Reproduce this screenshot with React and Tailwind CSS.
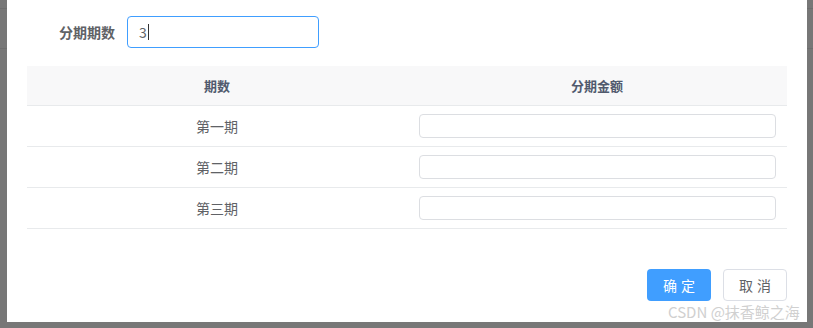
import React from "react";

export default function App() {
  const rows = ["第一期", "第二期", "第三期"];

  return (
    <div
      className="relative w-[813px] h-[328px] bg-[#777777] overflow-hidden"
      style={{ fontFamily: '"Noto Sans CJK SC", "Noto Sans", sans-serif' }}
    >
      <div className="absolute left-0 top-[8px] w-[7px] h-px bg-[#6e6e6e]" />
      <div className="absolute left-0 top-[48px] w-[7px] h-px bg-[#6e6e6e]" />
      <div className="absolute right-0 top-[8px] w-[6px] h-px bg-[#6e6e6e]" />
      <div className="absolute right-0 top-[48px] w-[6px] h-px bg-[#6e6e6e]" />

      <div className="ml-[7px] w-[800px] h-[322px] bg-white flex flex-col">
        {/* form row */}
        <div className="flex items-center h-[32px] mt-[16px]">
          <label className="w-[120px] pr-[12px] text-right text-[14px] font-bold text-[#606266]">
            分期期数
          </label>
          <div className="w-[192px] h-[32px] border border-[#409eff] rounded-[4px] flex items-center px-[11px]">
            <span className="text-[14px] text-[#606266]">3</span>
            <span className="w-px h-[16px] bg-[#333] ml-px" />
          </div>
        </div>

        {/* table */}
        <div className="mx-[20px] mt-[18px]">
          <div className="grid grid-cols-2 h-[40px] bg-[#f8f8f9] border-b border-[#e8eaec] items-center">
            <div className="text-center text-[13px] font-bold text-[#515a6e]">期数</div>
            <div className="text-center text-[13px] font-bold text-[#515a6e]">分期金额</div>
          </div>
          {rows.map((r) => (
            <div
              key={r}
              className="grid grid-cols-2 h-[41px] border-b border-[#e8eaec] items-center"
            >
              <div className="text-center text-[14px] text-[#606266]">{r}</div>
              <div className="pl-[12px] pr-[11px]">
                <div className="h-[24px] border border-[#dcdee2] rounded-[4px] bg-white" />
              </div>
            </div>
          ))}
        </div>

        {/* footer */}
        <div className="flex justify-end gap-[12px] mr-[20px] mt-[40px]">
          <button className="w-[64px] h-[32px] rounded-[4px] bg-[#409eff] text-white text-[14px] tracking-[4px] pl-[4px]">
            确定
          </button>
          <button className="w-[64px] h-[32px] rounded-[4px] bg-white border border-[#dcdfe6] text-[#606266] text-[14px] tracking-[4px] pl-[4px]">
            取消
          </button>
        </div>
      </div>

      <div className="absolute left-[668px] top-[302px] text-[15px] text-[#d0d0d0] leading-[20px]">
        CSDN @抹香鲸之海
      </div>
    </div>
  );
}
